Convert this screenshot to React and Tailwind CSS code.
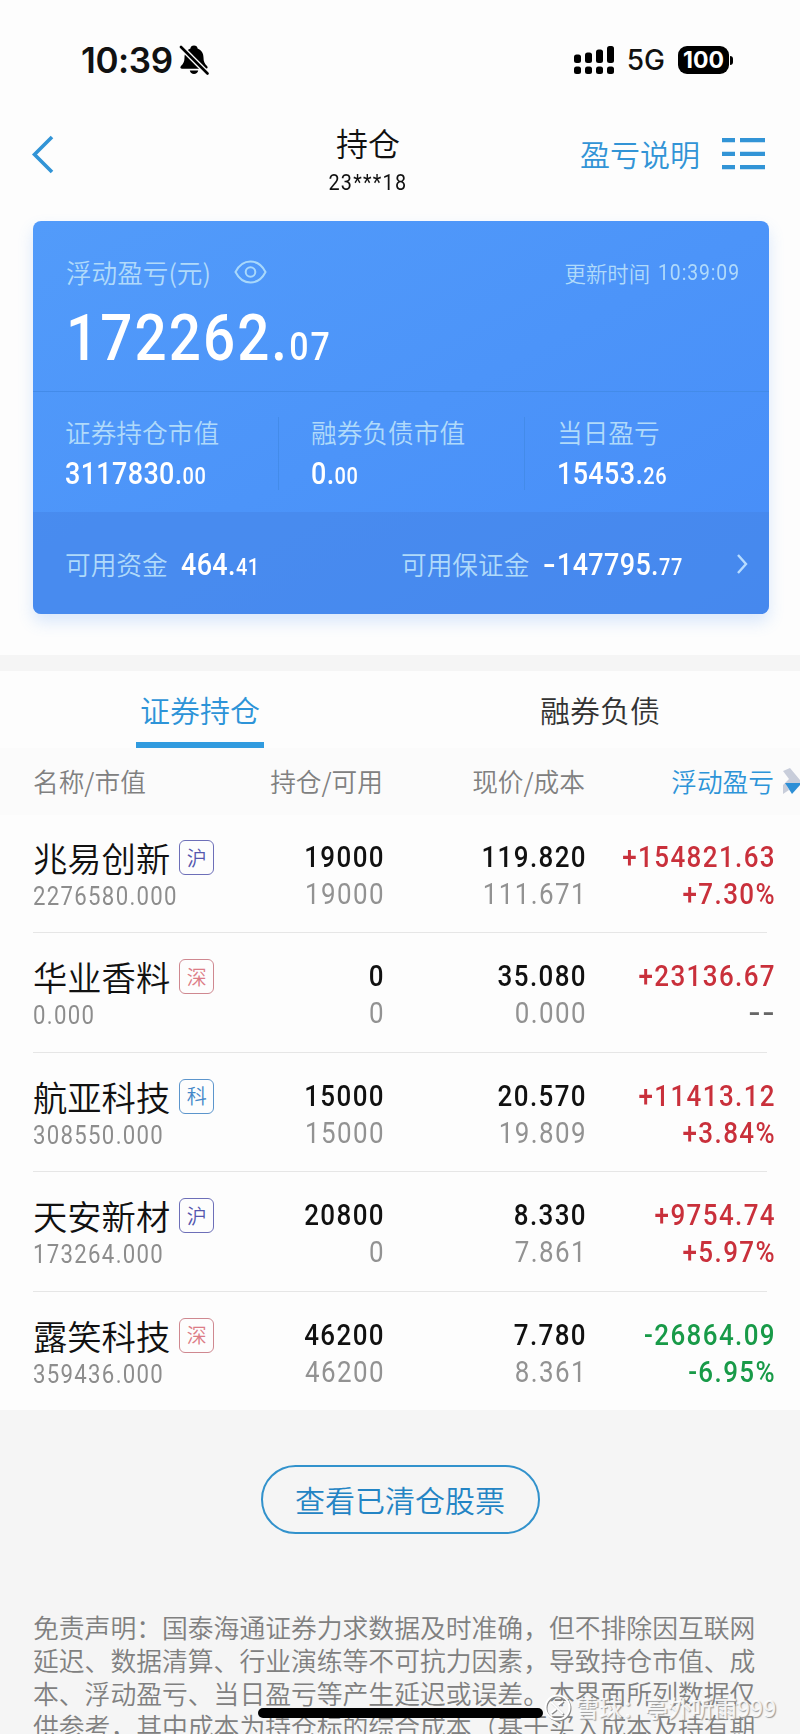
const rows = [
  { name: "兆易创新", tag: "沪", tc: "text-[#5557ae] border-[#6d6fb8]", mv: "2276580.000", q: "19000", a: "19000", p: "119.820", c: "111.671", g: "+154821.63", r: "+7.30%", col: "text-[#c9303b]", rc: "" },
  { name: "华业香料", tag: "深", tc: "text-[#dc7c86] border-[#cf8890]", mv: "0.000", q: "0", a: "0", p: "35.080", c: "0.000", g: "+23136.67", r: "--", col: "text-[#c9303b]", rc: "origin-right scale-x-[1.35] text-[#666]" },
  { name: "航亚科技", tag: "科", tc: "text-[#4587c8] border-[#5c95cc]", mv: "308550.000", q: "15000", a: "15000", p: "20.570", c: "19.809", g: "+11413.12", r: "+3.84%", col: "text-[#c9303b]", rc: "" },
  { name: "天安新材", tag: "沪", tc: "text-[#5557ae] border-[#6d6fb8]", mv: "173264.000", q: "20800", a: "0", p: "8.330", c: "7.861", g: "+9754.74", r: "+5.97%", col: "text-[#c9303b]", rc: "" },
  { name: "露笑科技", tag: "深", tc: "text-[#dc7c86] border-[#cf8890]", mv: "359436.000", q: "46200", a: "46200", p: "7.780", c: "8.361", g: "-26864.09", r: "-6.95%", col: "text-[#189a48]", rc: "" },
];

function Amount({ a, b }) {
  return (
    <span className="inline-block origin-left scale-x-[0.87] font-['Roboto'] text-[31px] font-medium tracking-[0.400px] whitespace-nowrap text-white">
      {a}.<span className="text-[23px] tracking-[0.700px]">{b}</span>
    </span>
  );
}

function StatusBar() {
  return (
    <div className="flex h-[120px] items-center pr-[67px] pl-[81px] font-['Inter']">
      <div className="text-[35px] leading-none font-semibold tracking-[-0.400px]">10:39</div>
      <svg className="ml-[6px] h-[32px] w-[30px]" viewBox="0 0 30 32">
        <path d="M15 1.500c-2.200 0-3.400 1.200-3.600 3C7.500 6 5.500 9.500 5.500 13.500c0 4-1 6-3.500 8.500-1.200 1.400-.6 2.800 1.200 2.800h23.600c1.800 0 2.400-1.400 1.200-2.800-2.500-2.500-3.500-4.500-3.500-8.500 0-4-2-7.500-5.900-9-.2-1.800-1.400-3-3.600-3zM10.800 26.500h8.400c-.4 2.200-2 3.500-4.200 3.500s-3.800-1.300-4.200-3.500z" />
        <path d="M1.500 2.500 29 30" stroke="#fdfdfd" strokeWidth="5.400" />
        <path d="M2 3 28.500 29.500" stroke="#000" strokeWidth="2.600" strokeLinecap="round" />
      </svg>
      <svg className="ml-auto h-[28px] w-[41px]" viewBox="0 0 41 28">
        <rect x="1" y="8.500" width="7" height="8.500" rx="2.500" />
        <rect x="12" y="6.500" width="7" height="10.500" rx="2.500" />
        <rect x="23" y="3.500" width="7" height="13.500" rx="2.500" />
        <rect x="34" y="0" width="7" height="17" rx="2.500" />
        <rect x="1" y="20.500" width="7" height="7.500" rx="2.500" />
        <rect x="12" y="20.500" width="7" height="7.500" rx="2.500" />
        <rect x="23" y="20.500" width="7" height="7.500" rx="2.500" />
        <rect x="34" y="20.500" width="7" height="7.500" rx="2.500" />
      </svg>
      <div className="ml-[13px] text-[28px] leading-none font-medium">5G</div>
      <div className="ml-[13px] flex h-[28px] w-[51px] items-center justify-center rounded-[9px] bg-black text-[23px] leading-none font-bold text-white">100</div>
      <div className="ml-px h-[9px] w-[3px] rounded-r-full bg-black" />
    </div>
  );
}

function NavBar() {
  return (
    <div className="flex h-[101px]">
      <div className="w-[267px] shrink-0">
        <svg className="mt-[14px] ml-[31px] h-[41px] w-[24px]" viewBox="0 0 24 41" fill="none">
          <path d="M21 3 3.500 20.500 21 38" stroke="#3294d6" strokeWidth="3.600" />
        </svg>
      </div>
      <div className="flex w-[202px] flex-col items-center">
        <div className="mt-[1px] text-[32px] leading-[42px] font-[350]">持仓</div>
        <div className="mt-[8px] origin-center scale-x-[0.9] font-['Roboto'] text-[22px] leading-[24px] tracking-[1.400px]">23***18</div>
      </div>
      <div className="flex flex-1 items-start justify-end pr-[35px]">
        <div className="mt-[11px] mr-[22px] text-[30px] leading-[44px] font-[350] whitespace-nowrap text-[#3294d6]">盈亏说明</div>
        <svg className="mt-[18px] h-[32px] w-[43px] shrink-0" viewBox="0 0 43 32" fill="#3294d6">
          <path d="M0 0h13v4.300H0zM18 0h25v4.300H18zM0 13.700h13V18H0zM18 13.700h25V18H18zM0 27h13v4.300H0zM18 27h25v4.300H18z" />
        </svg>
      </div>
    </div>
  );
}

function SummaryCard() {
  return (
    <div className="mr-[31px] ml-[33px] flex h-[393px] flex-col overflow-hidden rounded-[8px] bg-gradient-to-br from-[#529bfa] via-[#4c94f9] to-[#478df8] font-[350] text-[#b0dafa] shadow-[0_8px_16px_rgba(75,145,245,0.2)]">
      <div className="h-[171px] border-b border-[#438be9] pr-[29px] pl-[33px]">
        <div className="flex h-[102px] items-center">
          <span className="text-[25.600px] whitespace-nowrap">浮动盈亏(元)</span>
          <svg className="ml-[23px] h-[24px] w-[33px]" viewBox="0 0 33 24" fill="none" stroke="#a8d8fb" strokeWidth="2">
            <path d="M1.500 12C5 5 10 1.500 16.500 1.500S28 5 31.500 12C28 19 23 22.500 16.500 22.500S5 19 1.500 12z" />
            <circle cx="16.500" cy="12" r="4.800" />
          </svg>
          <span className="mt-[3px] ml-auto flex items-center text-[21.400px] whitespace-nowrap">更新时间<span className="-ml-[1px] inline-block origin-right scale-x-[0.9] font-['Roboto'] text-[21.500px] font-normal tracking-[1px]">10:39:09</span></span>
        </div>
        <div className="-mt-[19px] w-fit origin-left scale-x-[0.87] font-['Roboto'] text-[65px] leading-[68px] font-medium tracking-[2.400px] text-white">172262.<span className="text-[39px]">07</span></div>
      </div>
      <div className="flex h-[120px] pt-[25px]">
        <div className="flex h-[73px] w-[246px] flex-col border-r border-[#438be9] pl-[32px]">
          <span className="-mt-[2px] text-[25.700px] leading-[34px]">证券持仓市值</span>
          <span className="mt-[2px] leading-[46px]"><Amount a="3117830" b="00" /></span>
        </div>
        <div className="flex h-[73px] w-[246px] flex-col border-r border-[#438be9] pl-[32px]">
          <span className="-mt-[2px] text-[25.700px] leading-[34px]">融券负债市值</span>
          <span className="mt-[2px] leading-[46px]"><Amount a="0" b="00" /></span>
        </div>
        <div className="flex flex-col pl-[32px]">
          <span className="-mt-[2px] text-[25.700px] leading-[34px]">当日盈亏</span>
          <span className="mt-[2px] leading-[46px]"><Amount a="15453" b="26" /></span>
        </div>
      </div>
      <div className="flex flex-1 items-center bg-[#4686e8]/60 pt-[5px] pr-[20px] pl-[32px] text-[25.700px]">
        <div className="flex w-[336px] items-baseline gap-[13px]"><span>可用资金</span><Amount a="464" b="41" /></div>
        <div className="flex items-baseline gap-[14px]"><span className="whitespace-nowrap">可用保证金</span><span className="flex items-baseline gap-[3px]"><span className="inline-block origin-left scale-x-[1.200] font-['Roboto'] text-[31px] leading-none font-medium text-white">-</span><Amount a="147795" b="77" /></span></div>
        <svg className="-mt-[3px] ml-auto h-[20px] w-[13px] shrink-0" viewBox="0 0 13 20" fill="none"><path d="m2 1 8 9-8 9" stroke="#b7dcff" strokeWidth="2.400" /></svg>
      </div>
    </div>
  );
}

const figures = "flex origin-right scale-x-[0.88] flex-col items-end pt-[5px] font-['Roboto'] text-[29.500px] leading-[37px] tracking-[1.600px] whitespace-nowrap";

function Holding({ h }) {
  return (
    <div className="mr-[33px] ml-[33px] grid h-[119.400px] grid-cols-[167px_185px_202px_1fr] border-b border-[#e6e6e6] pt-[20px]">
      <div>
        <div className="flex h-[46px] items-center">
          <span className="text-[34.300px] leading-[44px] font-[350] whitespace-nowrap">{h.name}</span>
          <span className={`mt-px ml-[9px] flex h-[35px] w-[35px] shrink-0 items-center justify-center rounded-[6px] border text-[20px] leading-none font-[350] ${h.tc}`}>{h.tag}</span>
        </div>
        <div className="mt-[1px] w-fit origin-left scale-x-[0.87] font-['Roboto'] text-[25.500px] leading-[30px] font-[450] tracking-[1.500px] text-[#8d8d8d]">{h.mv}</div>
      </div>
      <div className={figures}>
        <div className="font-medium">{h.q}</div><div className="font-[450] text-[#929292]">{h.a}</div>
      </div>
      <div className={figures}>
        <div className="font-medium">{h.p}</div><div className="font-[450] text-[#929292]">{h.c}</div>
      </div>
      <div className={`-mr-[9px] font-medium ${figures} ${h.col}`}>
        <div>{h.g}</div><div className={h.rc}>{h.r}</div>
      </div>
    </div>
  );
}

export default function App() {
  return (
    <div className="relative h-[1734px] w-[800px] overflow-hidden bg-[#fdfdfd] font-['Noto_Sans_CJK_SC',sans-serif] text-[#111]">
      <StatusBar />
      <NavBar />
      <SummaryCard />
      <div className="mt-[41px] h-[16px] bg-[#f5f5f5]" />
      <div className="grid h-[77px] grid-cols-2 text-[30px] font-[350]">
        <div className="flex flex-col items-center text-[#2d94d8]">
          <span className="mt-[16px] leading-[44px]">证券持仓</span>
          <span className="mt-[11px] h-[6px] w-[128px] bg-[#319bdf]" />
        </div>
        <div className="flex flex-col items-center text-[#333]"><span className="mt-[16px] leading-[44px]">融券负债</span></div>
      </div>
      <div className="grid h-[67px] grid-cols-[198px_185px_202px_1fr] items-center overflow-hidden bg-[#fbfbfb] text-right text-[25.700px] font-[350] whitespace-nowrap text-[#808080]">
        <span className="pl-[33px] text-left">名称/市值</span>
        <span>持仓/可用</span>
        <span>现价/成本</span>
        <span className="flex items-center justify-end text-[#2d94d8]">
          浮动盈亏
          <svg className="ml-[8px] h-[27px] w-[18px]" viewBox="0 0 18 27">
            <path d="M1 3 8 0l10 12v4H4l3 6-6 4V17l6-6z" fill="#c8cdda" /><path d="M3 15h15v2l-8 9z" fill="#2d8fd6" />
          </svg>
        </span>
      </div>
      <div className="h-[595px] overflow-hidden"><div className="-mt-px">{rows.map((h) => <Holding key={h.name} h={h} />)}</div></div>
      <div className="h-[400px] bg-[#f5f5f5] pt-[55px]">
        <div className="mx-auto flex h-[69px] w-[279px] items-center justify-center rounded-full border-2 border-[#3292cc] text-[30px] font-[350] text-[#2384c4]">查看已清仓股票</div>
        <div className="mt-[76px] ml-[33px] text-[25.800px] leading-[33px] font-[350] whitespace-nowrap text-[#808080]">
          <div>免责声明：国泰海通证券力求数据及时准确，但不排除因互联网</div>
          <div>延迟、数据清算、行业演练等不可抗力因素，导致持仓市值、成</div>
          <div>本、浮动盈亏、当日盈亏等产生延迟或误差。本界面所列数据仅</div>
          <div>供参考，其中成本为持仓标的综合成本（基于买入成本及持有期</div>
        </div>
      </div>
      <div className="absolute top-[1708px] left-[258px] h-[10px] w-[285px] rounded-full bg-black" />
      <div className="absolute top-[1692px] left-[544px] flex items-center text-[23px] leading-[30px] font-medium whitespace-nowrap text-white/85 [text-shadow:1px_1px_1px_#999]">
        <svg className="mr-[5px] h-[27px] w-[27px] drop-shadow-[1px_1px_0.5px_#888]" viewBox="0 0 27 27" fill="none" stroke="#fff" strokeWidth="2"><circle cx="13.500" cy="13.500" r="12" /><path d="m7 8 12 12M19 7l-5 4M7 19l5-4" /></svg>
        雪球：亭外听雨999
      </div>
    </div>
  );
}
